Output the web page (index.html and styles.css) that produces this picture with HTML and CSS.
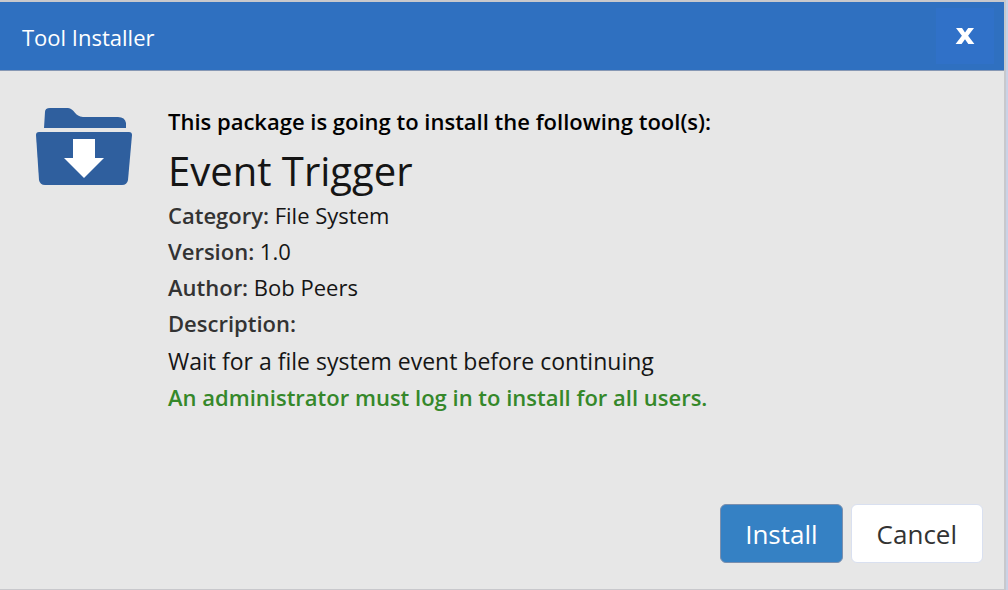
FILE: index.html
```html
<!DOCTYPE html>
<html lang="en">
<head>
<meta charset="utf-8">
<title>Tool Installer</title>
<link rel="stylesheet" href="styles.css">
</head>
<body>
<main class="dialog" role="dialog" aria-labelledby="dialog-title">
  <header class="titlebar">
    <h1 class="title" id="dialog-title">Tool Installer</h1>
    <button class="close" type="button" aria-label="Close">
      <svg class="close-icon" viewBox="0 0 20 18" aria-hidden="true"><path d="M1 1H7L10 5.6 13.2 1H19L13.1 8.7 19.4 17H13.3L10 12.2 6.6 17H.6L6.9 8.7Z" fill="#fff"/></svg>
    </button>
  </header>
  <div class="content">
    <svg class="folder" viewBox="0 0 98 80" aria-hidden="true">
      <path d="M9 21 10 5Q10 1 15 1H33C39 1 40 10 48 10H83Q90 10 91 16V21Z" fill="#2f5f9e"/>
      <path d="M4 25H94Q97 25 97 28L93 73Q92 78 87 78H10Q5 78 4 73L1 28Q1 25 4 25Z" fill="#2f5f9e"/>
      <path d="M38 32H60V51H69L49 71 29 51H38Z" fill="#fff"/>
    </svg>
    <div class="details">
      <p class="intro">This package is going to install the following tool(s):</p>
      <h2 class="tool">Event Trigger</h2>
      <p class="row"><span class="label">Category:</span> File System</p>
      <p class="row"><span class="label">Version:</span> 1.0</p>
      <p class="row"><span class="label">Author:</span> Bob Peers</p>
      <p class="row"><span class="label">Description:</span></p>
      <p class="row description">Wait for a file system event before continuing</p>
      <p class="row notice">An administrator must log in to install for all users.</p>
    </div>
  </div>
  <footer class="actions">
    <button class="button primary" type="button">Install</button>
    <button class="button" type="button">Cancel</button>
  </footer>
</main>
</body>
</html>
```
FILE: styles.css
```css
* {
  box-sizing: border-box;
}

body {
  margin: 0;
  padding-right: 2px;
  background: #c9d2e6;
  color: #151515;
  font-family: "Open Sans", "Noto Sans", sans-serif;
  font-size: 22px;
  line-height: 36px;
}

.dialog {
  display: flex;
  flex-direction: column;
  min-height: 100vh;
  border: 2px solid #c8c8cc;
  border-width: 2px 2px 1px 0;
  background: #e7e7e7;
}

.titlebar {
  display: flex;
  align-items: center;
  justify-content: space-between;
  height: 69px;
  padding: 0 10px 0 22px;
  border-bottom: 1px solid #8798b4;
  background: #2f70c0;
  color: #fff;
}

.title {
  margin: 0;
  padding-top: 2px;
  font-size: 22px;
  font-weight: 400;
}

.close {
  display: flex;
  align-items: center;
  justify-content: center;
  width: 58px;
  height: 56px;
  padding: 0;
  border: 0;
  background: #3071c8;
}

.close-icon {
  width: 20px;
  height: 18px;
}

.content {
  display: flex;
  flex: 1;
  align-items: flex-start;
  gap: 35px;
  padding: 32px 35px 0;
}

.folder {
  flex: none;
  width: 98px;
  height: 80px;
  margin-top: 4px;
}

.details {
  min-width: 0;
}

.intro,
.row,
.tool {
  margin: 0;
}

.intro {
  color: #000;
  font-weight: 600;
}

.tool {
  padding-top: 6px;
  font-size: 40px;
  font-weight: 400;
  line-height: 52px;
}

.label {
  color: #333;
  font-weight: 600;
}

.description {
  padding-top: 2px;
  font-size: 23px;
}

.notice {
  color: #35882a;
  font-weight: 600;
}

.actions {
  display: flex;
  justify-content: flex-end;
  gap: 8px;
  padding: 16px 21px 26px;
}

.button {
  height: 59px;
  padding: 0 25px;
  border: 1px solid #d9e0f0;
  border-radius: 6px;
  background: #fff;
  color: #333;
  font: inherit;
  font-size: 26px;
}

.primary {
  padding: 0 24px;
  border-color: #7b8fae;
  background: #3581c4;
  color: #fff;
}
```
